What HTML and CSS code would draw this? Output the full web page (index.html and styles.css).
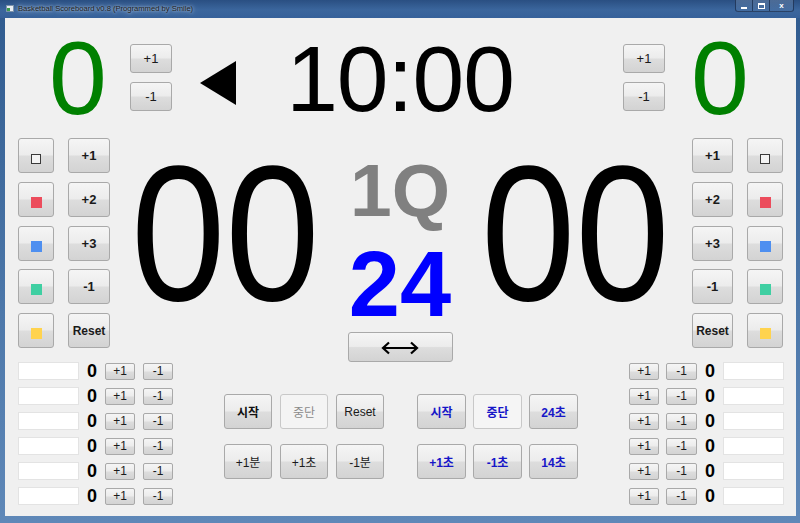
FILE: index.html
```html
<!DOCTYPE html>
<html lang="ko">
<head>
<meta charset="utf-8">
<title>Basketball Scoreboard v0.8</title>
<link rel="stylesheet" href="styles.css">
</head>
<body>
<div class="window">
  <div class="titlebar">
    <span class="app-icon"><span class="app-dot"></span></span>
    <span class="title">Basketball Scoreboard v0.8 (Programmed by Smile)</span>
    <div class="controls">
      <span class="ctl min"><span class="min-g"></span></span>
      <span class="ctl max"><span class="max-g"></span></span>
      <span class="ctl close"><span class="close-g">x</span></span>
    </div>
  </div>
  <div class="client">
    <div class="top">
      <div class="score">0</div>
      <div class="pm pm-l">
        <button class="btn">+1</button>
        <button class="btn">-1</button>
      </div>
      <svg class="tri" viewBox="0 0 36 44" width="36" height="44"><polygon points="36,0 36,44 0,22" fill="#000"/></svg>
      <div class="clock">10:00</div>
      <div class="pm pm-r">
        <button class="btn">+1</button>
        <button class="btn">-1</button>
      </div>
      <div class="score score-r">0</div>
    </div>

    <div class="middle">
      <div class="pad pad-l">
        <button class="btn"><span class="sq sq-w"></span></button>
        <button class="btn">+1</button>
        <button class="btn"><span class="sq sq-r"></span></button>
        <button class="btn">+2</button>
        <button class="btn"><span class="sq sq-b"></span></button>
        <button class="btn">+3</button>
        <button class="btn"><span class="sq sq-g"></span></button>
        <button class="btn">-1</button>
        <button class="btn"><span class="sq sq-y"></span></button>
        <button class="btn reset-sm">Reset</button>
      </div>
      <div class="big"><span class="big-num">00</span></div>
      <div class="center">
        <div class="period">1Q</div>
        <div class="shot">24</div>
        <button class="btn swap">
          <svg viewBox="0 0 40 14" width="40" height="14"><line x1="3" y1="7" x2="37" y2="7" stroke="#000" stroke-width="2.2"/><polyline points="9,1.5 3,7 9,12.5" fill="none" stroke="#000" stroke-width="2.2"/><polyline points="31,1.5 37,7 31,12.5" fill="none" stroke="#000" stroke-width="2.2"/></svg>
        </button>
      </div>
      <div class="big"><span class="big-num">00</span></div>
      <div class="pad pad-r">
        <button class="btn">+1</button>
        <button class="btn"><span class="sq sq-w"></span></button>
        <button class="btn">+2</button>
        <button class="btn"><span class="sq sq-r"></span></button>
        <button class="btn">+3</button>
        <button class="btn"><span class="sq sq-b"></span></button>
        <button class="btn">-1</button>
        <button class="btn"><span class="sq sq-g"></span></button>
        <button class="btn reset-sm">Reset</button>
        <button class="btn"><span class="sq sq-y"></span></button>
      </div>
    </div>

    <div class="bottom">
      <div class="rows">
        <div class="row"><span class="field"></span><span class="pts">0</span><button class="btn sbtn">+1</button><button class="btn sbtn sb2">-1</button></div>
        <div class="row"><span class="field"></span><span class="pts">0</span><button class="btn sbtn">+1</button><button class="btn sbtn sb2">-1</button></div>
        <div class="row"><span class="field"></span><span class="pts">0</span><button class="btn sbtn">+1</button><button class="btn sbtn sb2">-1</button></div>
        <div class="row"><span class="field"></span><span class="pts">0</span><button class="btn sbtn">+1</button><button class="btn sbtn sb2">-1</button></div>
        <div class="row"><span class="field"></span><span class="pts">0</span><button class="btn sbtn">+1</button><button class="btn sbtn sb2">-1</button></div>
        <div class="row"><span class="field"></span><span class="pts">0</span><button class="btn sbtn">+1</button><button class="btn sbtn sb2">-1</button></div>
      </div>

      <div class="groups">
        <div class="grp g1">
          <button class="btn kb">시작</button>
          <button class="btn dis">중단</button>
          <button class="btn">Reset</button>
          <button class="btn">+1분</button>
          <button class="btn">+1초</button>
          <button class="btn">-1분</button>
        </div>
        <div class="grp g2">
          <button class="btn blue">시작</button>
          <button class="btn blue light">중단</button>
          <button class="btn blue">24초</button>
          <button class="btn blue">+1초</button>
          <button class="btn blue">-1초</button>
          <button class="btn blue">14초</button>
        </div>
      </div>

      <div class="rows rows-r">
        <div class="row"><button class="btn sbtn">+1</button><button class="btn sbtn sb2r">-1</button><span class="pts">0</span><span class="field"></span></div>
        <div class="row"><button class="btn sbtn">+1</button><button class="btn sbtn sb2r">-1</button><span class="pts">0</span><span class="field"></span></div>
        <div class="row"><button class="btn sbtn">+1</button><button class="btn sbtn sb2r">-1</button><span class="pts">0</span><span class="field"></span></div>
        <div class="row"><button class="btn sbtn">+1</button><button class="btn sbtn sb2r">-1</button><span class="pts">0</span><span class="field"></span></div>
        <div class="row"><button class="btn sbtn">+1</button><button class="btn sbtn sb2r">-1</button><span class="pts">0</span><span class="field"></span></div>
        <div class="row"><button class="btn sbtn">+1</button><button class="btn sbtn sb2r">-1</button><span class="pts">0</span><span class="field"></span></div>
      </div>
    </div>
  </div>
</div>
</body>
</html>
```

FILE: styles.css
```css
* { box-sizing: border-box; }
html, body { margin: 0; padding: 0; }
body {
  width: 800px;
  height: 523px;
  overflow: hidden;
  font-family: "Liberation Sans", "Noto Sans CJK KR", sans-serif;
}
.window {
  width: 800px;
  height: 523px;
  display: flex;
  flex-direction: column;
  background: linear-gradient(to bottom, #2f5a8e 0%, #4d78aa 60%, #5f88b8 100%);
}
.titlebar {
  height: 18px;
  flex: none;
  display: flex;
  align-items: flex-start;
  background: linear-gradient(to bottom, #2a4f82 0%, #3b669d 55%, #36619a 100%);
}
.app-icon {
  margin: 5px 0 0 6px;
  width: 8px;
  height: 7px;
  background: #e9eef3;
  border: 1px solid #7d93ab;
  display: flex;
  align-items: flex-end;
}
.app-dot { width: 3px; height: 3px; background: #3a9a4a; }
.title {
  margin: 3px 0 0 4px;
  font-size: 7.6px;
  line-height: 11px;
  color: #1c1c1c;
  white-space: nowrap;
  text-shadow: 0 0 3px rgba(215, 230, 248, 0.95), 0 0 7px rgba(215, 230, 248, 0.7);
}
.controls { margin-left: auto; margin-right: 6px; display: flex; }
.ctl {
  height: 12px;
  border: 1px solid rgba(12, 28, 55, 0.6);
  border-top: 0;
  background: linear-gradient(rgba(255, 255, 255, 0.16), rgba(255, 255, 255, 0.04));
  display: flex;
  align-items: center;
  justify-content: center;
}
.ctl.min { width: 17px; border-right: 0; border-radius: 0 0 0 3px; }
.ctl.max { width: 17px; border-right: 0; }
.ctl.close { width: 25px; border-radius: 0 0 3px 0; }
.min-g { width: 6px; height: 2px; background: #fff; margin-top: 4px; }
.max-g { width: 7px; height: 6px; border: 1px solid #fff; border-top-width: 2px; }
.close-g { font: bold 8px "Liberation Sans", sans-serif; color: #fff; line-height: 1; }

.client {
  flex: 1;
  margin: 0 4px 7px 5px;
  background: #f0f0f0;
  display: flex;
  flex-direction: column;
}

.btn {
  box-sizing: border-box;
  margin: 0;
  padding: 0;
  border: 1px solid #a9a9a9;
  border-radius: 3px;
  background: linear-gradient(to bottom, #f5f5f5 0%, #ececec 48%, #dddddd 52%, #d3d3d3 100%);
  font-family: "Liberation Sans", "Noto Sans CJK KR", sans-serif;
  font-size: 12px;
  color: #1a1a1a;
  display: flex;
  align-items: center;
  justify-content: center;
}

/* top row */
.top {
  height: 112px;
  flex: none;
  display: flex;
  align-items: flex-start;
  padding-left: 35px;
}
.score {
  width: 76px;
  margin-top: 8px;
  font-size: 104px;
  line-height: 1;
  text-align: center;
  color: #008000;
}
.score-r { margin-left: 17px; }
.pm { margin-top: 26px; display: flex; flex-direction: column; gap: 9px; }
.pm .btn { width: 42px; height: 29px; font-size: 13px; }
.pm-l { margin-left: 14px; }
.pm-r { margin-left: 93px; }
.tri { margin-left: 28px; margin-top: 43px; display: block; }
.clock {
  margin-left: 34px;
  width: 260px;
  margin-top: 15px;
  font-size: 93px;
  line-height: 1;
  text-align: center;
  color: #000;
  letter-spacing: -1px;
}

/* middle */
.middle {
  height: 225px;
  flex: none;
  display: flex;
  align-items: flex-start;
  padding-left: 13px;
}
.pad {
  margin-top: 8px;
  display: grid;
  grid-template-rows: repeat(5, 35px);
  row-gap: 8.75px;
  column-gap: 14px;
}
.pad-l { grid-template-columns: 36px 42px; }
.pad-r { grid-template-columns: 41px 36px; margin-left: 2px; }
.pad .btn { font-size: 13px; font-weight: bold; }
.pad .reset-sm { font-size: 12px; }
.sq { width: 11px; height: 11px; margin-top: 6px; display: block; }
.sq-w { width: 10px; height: 10px; background: #f4f4f4; border: 1px solid #3a3a3a; }
.sq-r { background: #ec4c5c; }
.sq-b { background: #4e8ff0; }
.sq-g { background: #3fcfa2; }
.sq-y { background: #ffd34e; }
.big {
  width: 230px;
  margin-top: 7px;
  font-size: 193px;
  line-height: 1;
  text-align: center;
  color: #000;
}
.big-num { display: inline-block; transform: scaleX(0.88); }
.center { width: 120px; display: flex; flex-direction: column; align-items: center; }
.period {
  margin-top: 23px;
  font-size: 75px;
  font-weight: bold;
  line-height: 1;
  color: #808080;
}
.shot {
  margin-top: 10px;
  font-size: 92px;
  font-weight: bold;
  line-height: 1;
  color: #0000ff;
}
.swap { margin-top: 2px; width: 105px; height: 30px; }
.swap svg { display: block; margin-top: 2px; }

/* bottom */
.bottom {
  flex: 1;
  display: flex;
  align-items: flex-start;
  padding-left: 13px;
}
.rows { margin-top: 7px; display: flex; flex-direction: column; gap: 7px; }
.rows-r { margin-left: 51px; }
.row { display: flex; align-items: center; height: 18px; }
.field { width: 61px; height: 18px; background: #fff; border: 1px solid #e3e3e3; display: block; }
.pts { width: 26px; text-align: center; font-size: 18px; font-weight: bold; line-height: 18px; color: #000; }
.sbtn { width: 30px; height: 17px; font-size: 12px; border-radius: 2px; }
.sb2 { margin-left: 8px; }
.sb2r { margin-left: 7px; width: 31px; }

.groups { margin-left: 51px; margin-top: 39px; display: flex; }
.grp { display: grid; grid-template-rows: 35px 35px; row-gap: 15px; }
.g1 { grid-template-columns: repeat(3, 48px); column-gap: 8px; }
.g2 { grid-template-columns: repeat(3, 49px); column-gap: 7px; margin-left: 33px; }
.kb { font-weight: bold; color: #111; }
.dis { background: #f4f4f4; border-color: #c8c8c8; color: #8a8a8a; }
.blue { font-weight: bold; color: #1616c8; }
.light { background: #f5f5f5; border-color: #c8c8c8; }
```
